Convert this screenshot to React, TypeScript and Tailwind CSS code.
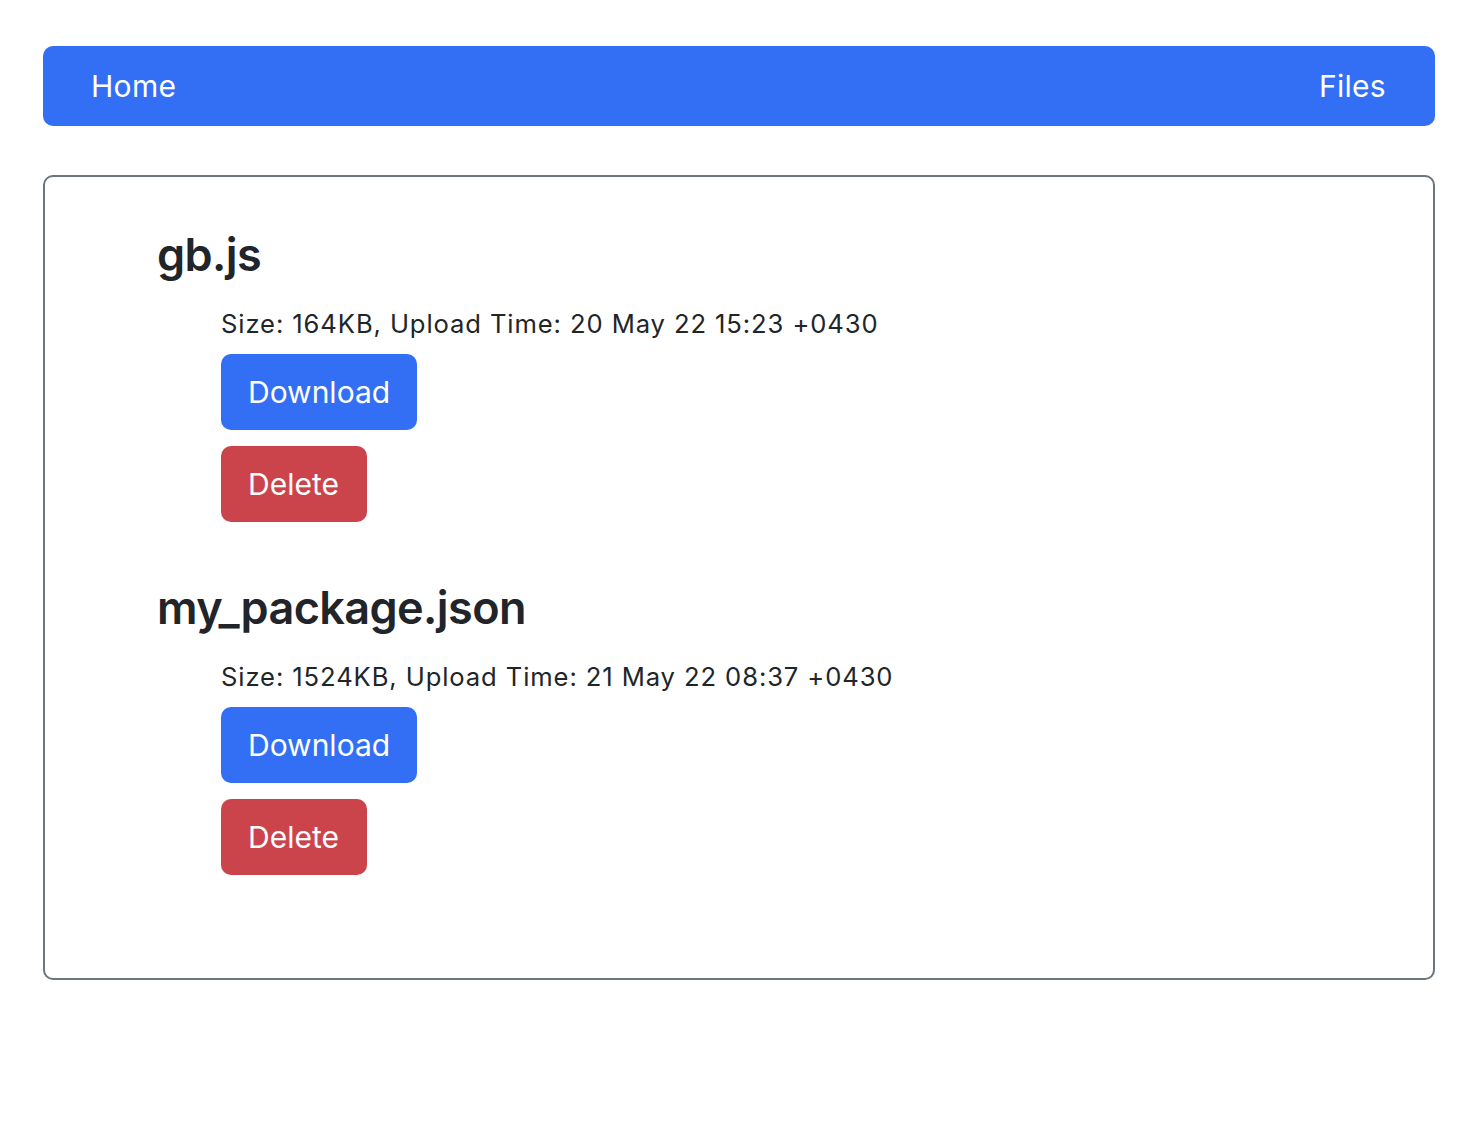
import React from "react";

const files = [
  { name: "gb.js", info: "Size: 164KB, Upload Time: 20 May 22 15:23 +0430" },
  { name: "my_package.json", info: "Size: 1524KB, Upload Time: 21 May 22 08:37 +0430" },
];

export default function App() {
  return (
    <div
      className="min-h-[1137px] bg-white pt-[46px] pl-[43px] text-[#212529]"
      style={{ fontFamily: "Inter, 'Noto Sans', sans-serif" }}
    >
      <nav className="flex h-[80px] w-[1392px] items-center justify-between rounded-[10px] bg-[#336ff4] pl-[48px] pr-[49px] text-[30px] tracking-[0.3px] text-white">
        <span>Home</span>
        <span>Files</span>
      </nav>
      <div className="mt-[49px] flex h-[805px] w-[1392px] flex-col rounded-[10px] border-2 border-[#6c757d] pl-[112px] pt-[51px]">
        {files.map((f, i) => (
          <div key={f.name} className={i > 0 ? "mt-[59px]" : ""}>
            <h3 className="h-[54px] text-[45px] font-semibold leading-[54px] tracking-[-0.6px]">{f.name}</h3>
            <div className="ml-[64px] flex flex-col items-start">
              <p className="mt-[23px] h-[38px] text-[25.6px] leading-[38px] tracking-[0.9px]">{f.info}</p>
              <button className="mt-[11px] flex h-[76px] items-center rounded-[10px] bg-[#336ff4] px-[27px] text-[30px] text-white">
                Download
              </button>
              <button className="mt-[16px] flex h-[76px] items-center rounded-[10px] bg-[#cc444b] pl-[27px] pr-[28px] text-[30px] text-white">
                Delete
              </button>
            </div>
          </div>
        ))}
      </div>
    </div>
  );
}
